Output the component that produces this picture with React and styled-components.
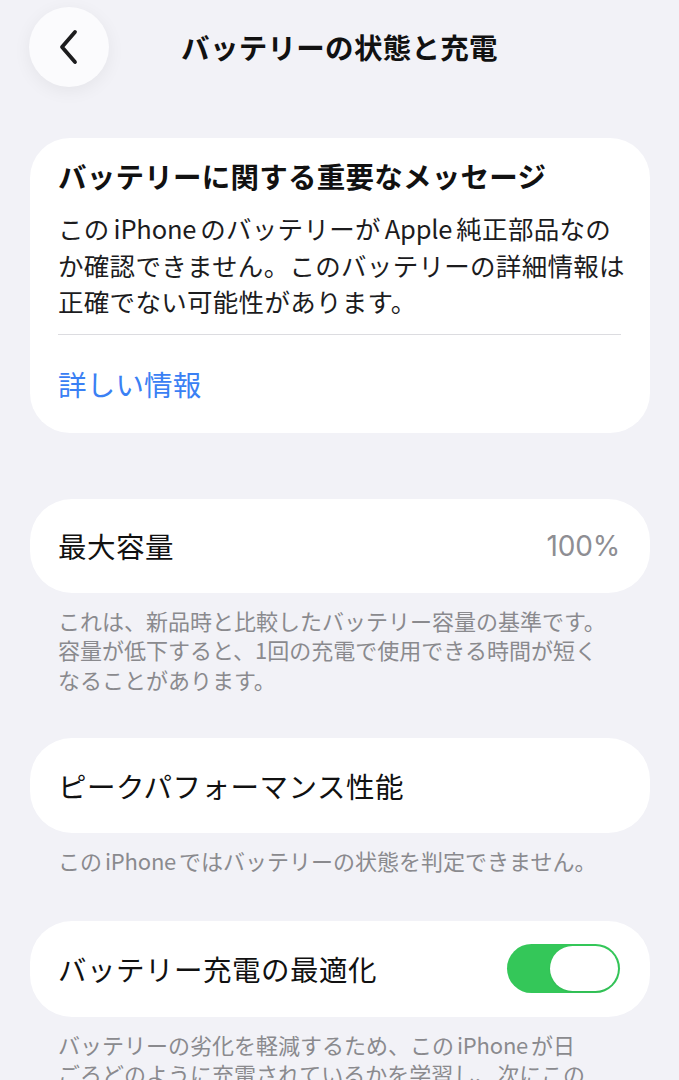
import React from "react";
import styled, { createGlobalStyle } from "styled-components";

const Global = createGlobalStyle`
  html, body {
    margin: 0;
    padding: 0;
    background: #f2f2f7;
  }
  body {
    font-family: "Noto Sans CJK JP", "Noto Sans", sans-serif;
    color: #1c1c1e;
    -webkit-font-smoothing: antialiased;
  }
`;

const Page = styled.div`
  width: 679px;
  min-height: 1080px;
  background: #f2f2f7;
  box-sizing: border-box;
  padding: 7px 29px 0 30px;
  display: flex;
  flex-direction: column;
`;

const Header = styled.header`
  display: grid;
  grid-template-columns: 1fr auto 1fr;
  align-items: center;
  height: 80px;
  margin-left: -1px;
`;

const BackButton = styled.button`
  width: 80px;
  height: 80px;
  border-radius: 50%;
  border: none;
  background: #fbfbfd;
  box-shadow: 0 4px 18px rgba(0, 0, 0, 0.06);
  display: flex;
  align-items: center;
  justify-content: center;
  padding: 0;
  justify-self: start;
  cursor: pointer;
`;

const Title = styled.h1`
  margin: 0;
  font-size: 28.5px;
  font-weight: 700;
  letter-spacing: 0.3px;
  color: #111;
  line-height: 1;
`;

const Card = styled.section`
  background: #ffffff;
  border-radius: ${(p) => p.$radius || 42}px;
  margin-top: ${(p) => p.$gap}px;
  box-sizing: border-box;
`;

const MessageBody = styled.div`
  padding: 19px 12px 0 28px;
`;

const MessageTitle = styled.h2`
  margin: 0;
  font-size: 28.5px;
  line-height: 38px;
  font-weight: 700;
  color: #111;
  letter-spacing: 0.25px;
`;

const MessageText = styled.p`
  margin: 15px 0 0;
  font-size: 25.5px;
  line-height: 36.5px;
  font-weight: 400;
  color: #1c1c1e;
  letter-spacing: 0.3px;
  white-space: nowrap;
`;

const Latin = styled.span`
  margin: 0 ${(p) => p.$space || 4}px;
  letter-spacing: -0.2px;
`;

const Divider = styled.div`
  height: 1px;
  background: #dcdce0;
  margin: 14px 29px 0 28px;
`;

const LinkRow = styled.a`
  display: flex;
  align-items: center;
  height: 98px;
  padding-left: 28px;
  font-size: 28.5px;
  color: #3a80f4;
  text-decoration: none;
  letter-spacing: 0.2px;
`;

const Row = styled.div`
  display: flex;
  align-items: center;
  justify-content: space-between;
  height: ${(p) => p.$h || 95}px;
  padding: 0 30px 0 28px;
`;

const RowLabel = styled.span`
  font-size: 28.5px;
  font-weight: 400;
  color: #111;
  letter-spacing: 0.5px;
`;

const RowValue = styled.span`
  font-size: 28px;
  font-family: "Inter", "Noto Sans", sans-serif;
  font-weight: 400;
  color: #8e8e93;
  letter-spacing: -0.2px;
`;

const Footnote = styled.p`
  margin: 13px 0 0;
  padding: 0 12px 0 28px;
  font-size: 22px;
  line-height: 29.5px;
  color: #8a8a8e;
  letter-spacing: 0;
  white-space: nowrap;
`;

const Toggle = styled.div`
  width: 113px;
  height: 49px;
  border-radius: 25px;
  background: ${(p) => (p.$on ? "#34c759" : "#e5e5ea")};
  display: flex;
  align-items: center;
  justify-content: ${(p) => (p.$on ? "flex-end" : "flex-start")};
  padding: 0 2px;
  box-sizing: border-box;
`;

const Knob = styled.div`
  width: 68px;
  height: 45px;
  border-radius: 23px;
  background: #ffffff;
  box-shadow: 0 1px 2px rgba(0, 0, 0, 0.08);
`;

function Chevron() {
  return (
    <svg width="24" height="36" viewBox="0 0 24 36" fill="none">
      <path
        d="M18 3 L5 18 L18 33"
        stroke="#1c1c1e"
        strokeWidth="3.8"
        strokeLinecap="round"
        strokeLinejoin="round"
      />
    </svg>
  );
}

export default function App() {
  return (
    <>
      <Global />
      <Page>
        <Header>
          <BackButton aria-label="戻る">
            <Chevron />
          </BackButton>
          <Title>バッテリーの状態と充電</Title>
          <span />
        </Header>

        <Card $gap={51} $radius={40}>
          <MessageBody>
            <MessageTitle>バッテリーに関する重要なメッセージ</MessageTitle>
            <MessageText>
              この<Latin>iPhone</Latin>のバッテリーが<Latin>Apple</Latin>純正部品なの
              <br />
              か確認できません。このバッテリーの詳細情報は
              <br />
              正確でない可能性があります。
            </MessageText>
          </MessageBody>
          <Divider />
          <LinkRow href="#">詳しい情報</LinkRow>
        </Card>

        <Card $gap={66}>
          <Row $h={94}>
            <RowLabel>最大容量</RowLabel>
            <RowValue>100%</RowValue>
          </Row>
        </Card>
        <Footnote>
          これは、新品時と比較したバッテリー容量の基準です。
          <br />
          容量が低下すると、1回の充電で使用できる時間が短く
          <br />
          なることがあります。
        </Footnote>

        <Card $gap={44}>
          <Row>
            <RowLabel>ピークパフォーマンス性能</RowLabel>
          </Row>
        </Card>
        <Footnote>
          この<Latin $space={3}>iPhone</Latin>ではバッテリーの状態を判定できません。
        </Footnote>

        <Card $gap={45}>
          <Row $h={96}>
            <RowLabel>バッテリー充電の最適化</RowLabel>
            <Toggle $on>
              <Knob />
            </Toggle>
          </Row>
        </Card>
        <Footnote>
          バッテリーの劣化を軽減するため、この<Latin $space={3}>iPhone</Latin>が日
          <br />
          ごろどのように充電されているかを学習し、次にこの
        </Footnote>
      </Page>
    </>
  );
}
